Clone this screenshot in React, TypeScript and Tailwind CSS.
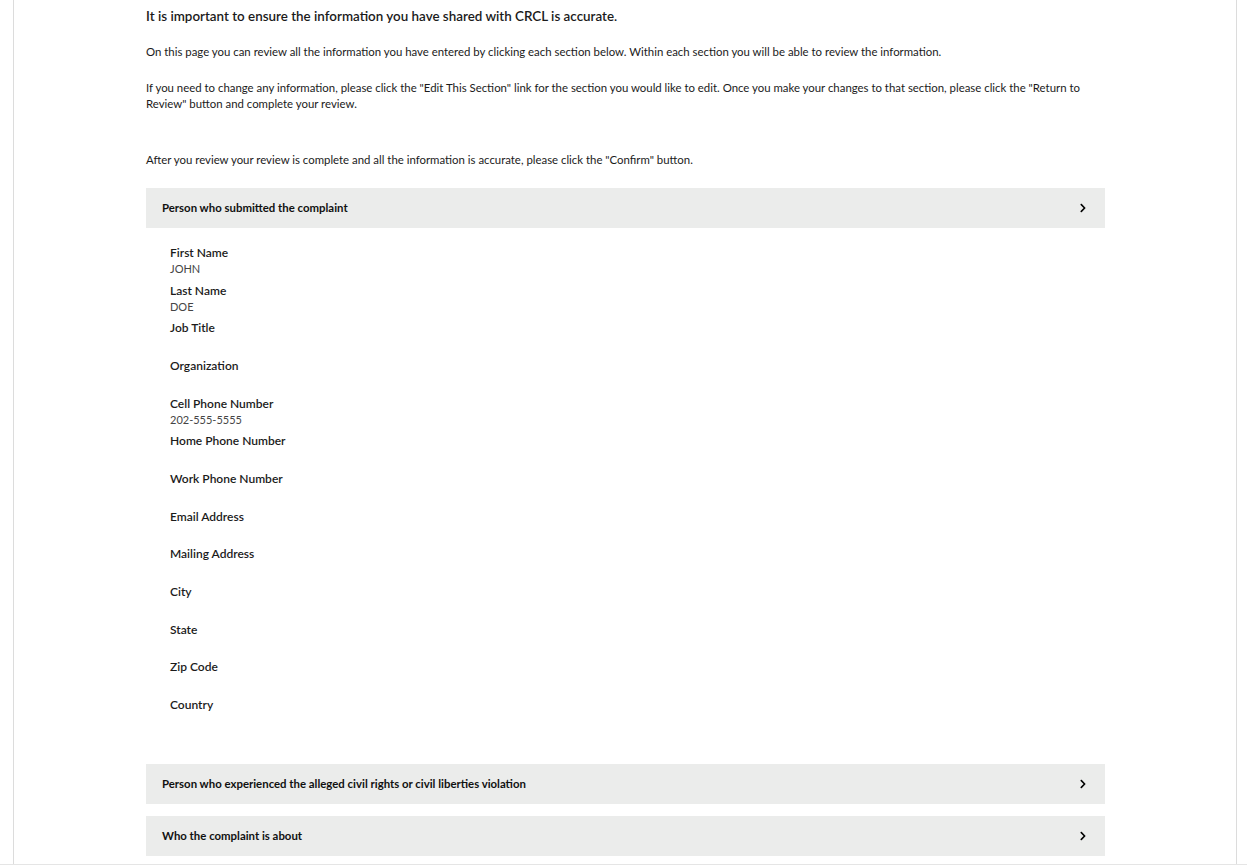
import { FaChevronRight } from "react-icons/fa";

const fields = [
  { label: "First Name", value: "JOHN" },
  { label: "Last Name", value: "DOE" },
  { label: "Job Title", value: "" },
  { label: "Organization", value: "" },
  { label: "Cell Phone Number", value: "202-555-5555" },
  { label: "Home Phone Number", value: "" },
  { label: "Work Phone Number", value: "" },
  { label: "Email Address", value: "" },
  { label: "Mailing Address", value: "" },
  { label: "City", value: "" },
  { label: "State", value: "" },
  { label: "Zip Code", value: "" },
  { label: "Country", value: "" },
];

const SectionBar = ({ title }: { title: string }) => (
  <button className="w-full h-[40px] bg-[#ebeceb] flex items-center justify-between pl-4 pr-[17px] text-left">
    <span className="text-[11.4px] font-bold text-[#111]">{title}</span>
    <FaChevronRight size={10} className="text-black" />
  </button>
);

export default function App() {
  return (
    <div className="min-h-screen bg-white" style={{ fontFamily: "Lato, 'Noto Sans', sans-serif" }}>
      <div className="h-[865px] border-b border-[#e5e5e5]">
        <div className="ml-[13px] mr-[10px] h-full border-x border-[#dcdcdc] overflow-hidden">
          <div className="pl-[132px] pr-[131px] text-[#1b1b1b]">
            <h2 className="pt-[6px] text-[13.4px] leading-[20px] font-semibold">
              It is important to ensure the information you have shared with CRCL is accurate.
            </h2>
            <p className="mt-[18px] text-[11.4px] leading-[16px]">
              On this page you can review all the information you have entered by clicking each section below. Within each section you will be able to review the information.
            </p>
            <p className="mt-[20px] text-[11.4px] leading-[16px]">
              If you need to change any information, please click the "Edit This Section" link for the section you would like to edit. Once you make your changes to that section, please click the "Return to Review" button and complete your review.
            </p>
            <p className="mt-[40px] text-[11.4px] leading-[16px]">
              After you review your review is complete and all the information is accurate, please click the "Confirm" button.
            </p>

            <div className="mt-[20px]">
              <SectionBar title="Person who submitted the complaint" />
              <div className="pl-6 pt-[17px] pb-[29px]">
                {fields.map((f) => (
                  <div key={f.label} className="h-[37.67px]">
                    <div className="text-[12px] leading-[16px] font-semibold text-[#1b1b1b]">{f.label}</div>
                    <div className="text-[11px] leading-[16px] text-[#454545] min-h-[16px]">{f.value}</div>
                  </div>
                ))}
              </div>
              <SectionBar title="Person who experienced the alleged civil rights or civil liberties violation" />
              <div className="h-[12px]" />
              <SectionBar title="Who the complaint is about" />
            </div>
          </div>
        </div>
      </div>
    </div>
  );
}
